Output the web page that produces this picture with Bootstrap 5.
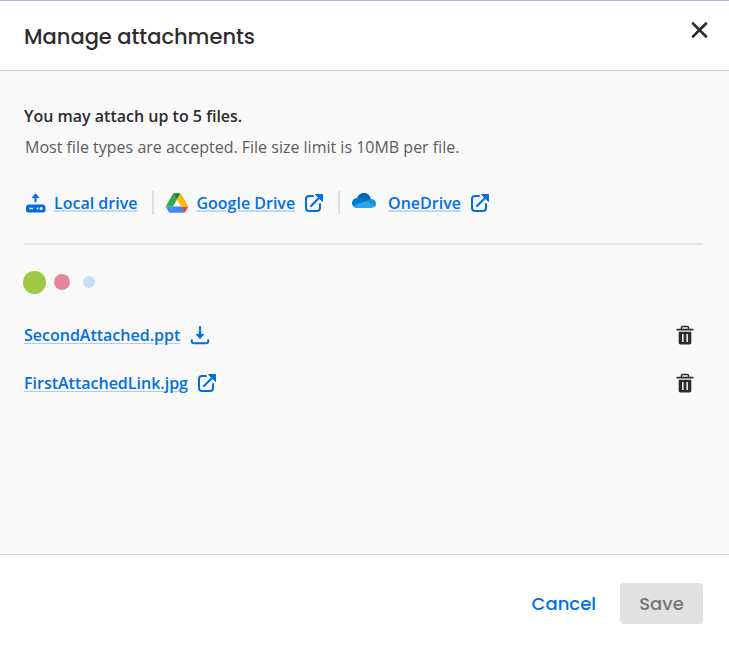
<!DOCTYPE html>
<html lang="en">
<head>
<meta charset="utf-8">
<meta name="viewport" content="width=device-width, initial-scale=1">
<title>Manage attachments</title>
<link href="https://cdn.jsdelivr.net/npm/bootstrap@5.3.0/dist/css/bootstrap.min.css" rel="stylesheet">
<style>
  body { font-family: "Open Sans", sans-serif; font-size: 16px; line-height: 24px; color: #2d2d2f; background: #fff; }
  svg { display: block; flex: none; }
  .dialog-head { border-top: 1px solid #c4a8ec; border-bottom: 1px solid #d0d0d0; padding: 15px 16px 12px 24px; }
  .dialog-title, .dialog-foot .btn { font-family: Poppins, Inter, sans-serif; font-weight: 500; }
  .dialog-title { font-size: 21px; line-height: 42px; }
  .icon-btn { padding: 4px; line-height: 1; color: #2d2d2f; }
  .dialog-main { background: #f9f9f9; padding: 33px 26px 24px 24px; }
  .lead-line { font-weight: 600; margin-bottom: 7px; }
  .hint-line { color: #5c5c5c; padding-left: 1px; margin-bottom: 32px; }
  .sources { gap: 15px; padding-bottom: 28px; border-bottom: 2px solid #e3e3e3; }
  .source { gap: 8px; color: #006fe6; }
  .source + .source { padding-left: 12px; border-left: 2px solid #dedede; }
  .source .ext-icon { margin-left: 2px; }
  .text-link { color: #006fe6; font-weight: 600; text-decoration: underline; text-decoration-color: #a9cdf5; text-decoration-thickness: 1px; text-underline-offset: 2px; }
  .source .text-link { text-decoration-color: #bcd9f8; text-decoration-thickness: 2px; text-underline-offset: 1px; }
  .text-link:hover { color: #0052ad; }
  .loader { height: 24px; margin: 25px 0 17px; }
  .dot { border-radius: 50%; }
  .dot-lg { width: 23px; height: 23px; background: #9ec946; margin-left: -1px; }
  .dot-md { width: 16px; height: 16px; background: #e58597; margin-left: 8px; }
  .dot-sm { width: 12px; height: 12px; background: #c7def7; margin-left: 13px; }
  .file-row { height: 48px; gap: 10px; color: #006fe6; padding-right: 5px; }
  .dialog-foot { border-top: 1px solid #d0d0d0; padding: 28px 26px 22px; gap: 8px; }
  .dialog-foot .btn { font-size: 18px; line-height: 25px; padding: 8px 16px; border: 0; border-radius: 4px; }
  .cancel-btn { color: #006fe6; }
  .save-btn, .save-btn:disabled { background: #e1e1e1; color: #757575; opacity: 1; min-width: 83px; }
</style>
</head>
<body>
<svg class="d-none" aria-hidden="true">
  <symbol id="external" viewBox="0 0 18 18">
    <path d="M8 2H4a3 3 0 0 0-3 3v9a3 3 0 0 0 3 3h8a3 3 0 0 0 3-3v-4" fill="none" stroke="currentColor" stroke-width="2" stroke-linecap="round"/>
    <path d="M6 12l8-8" stroke="currentColor" stroke-width="2.200" stroke-linecap="round"/>
    <path d="M10.500 .5h7v7z" fill="currentColor" stroke="currentColor" stroke-linejoin="round"/>
  </symbol>
  <symbol id="trash" viewBox="0 0 18 20">
    <path d="M5.500 4V2.500q0-1 1-1h5q1 0 1 1V4" fill="none" stroke="currentColor" stroke-width="1.500"/>
    <path d="M1 3.800h16q.6 0 .6.900t-.6.900H1q-.6 0-.6-.9t.6-.9z" fill="currentColor"/>
    <path fill-rule="evenodd" d="M2.700 6.800h12.600v11q0 1.700-1.700 1.700H4.400q-1.700 0-1.700-1.700zM6.100 9v8h1.500V9zM10.400 9v8h1.500V9z" fill="currentColor"/>
  </symbol>
</svg>
<div class="d-flex flex-column min-vh-100" role="dialog" aria-labelledby="dialog-title">
  <header class="dialog-head d-flex justify-content-between align-items-start">
    <h1 class="dialog-title mb-0" id="dialog-title">Manage attachments</h1>
    <button type="button" class="btn border-0 icon-btn" aria-label="Close">
      <svg width="19" height="19" viewBox="0 0 19 19"><path d="M3 3.500l13 13M16 3.500l-13 13" stroke="currentColor" stroke-width="2.600" stroke-linecap="round"/></svg>
    </button>
  </header>
  <main class="dialog-main flex-grow-1">
    <p class="lead-line">You may attach up to 5 files.</p>
    <p class="hint-line">Most file types are accepted. File size limit is 10MB per file.</p>
    <div class="sources d-flex flex-wrap">
      <div class="source d-flex align-items-center">
        <svg width="22" height="20" viewBox="0 0 22 20" aria-hidden="true">
          <path d="M11.500 8.500V3" stroke="currentColor" stroke-width="2" stroke-linecap="round"/><path d="M8.300 4.600l3.200-3.800 3.200 3.800z" fill="currentColor" stroke="currentColor" stroke-linejoin="round"/>
          <path fill-rule="evenodd" d="M5 11.500h13q3.500 0 3.500 3v2.500q0 2.500-2.500 2.500H4.500Q2 19.500 2 17v-2.500q0-3 3-3zM5.500 14.700v1.600h3.500v-1.600zM12.500 15.500a1 1 0 1 0 2 0 1 1 0 0 0-2 0zM15.700 15.500a1.500 1.500 0 1 0 3 0 1.500 1.500 0 0 0-3 0z" fill="currentColor"/>
        </svg>
        <a class="text-link" href="#">Local drive</a>
      </div>
      <div class="source d-flex align-items-center">
        <svg width="22" height="20" viewBox="0 0 87.300 78" aria-hidden="true">
          <path d="M6.600 66.850l3.850 6.650c.8 1.400 1.950 2.500 3.300 3.300L27.500 53H0c0 1.550.4 3.100 1.200 4.500z" fill="#4285f4"/>
          <path d="M43.650 25L29.900 1.200c-1.350.8-2.500 1.900-3.300 3.300L1.200 48.500A9 9 0 0 0 0 53h27.500z" fill="#34a853"/>
          <path d="M73.550 76.800c1.350-.8 2.500-1.900 3.300-3.300L86.100 57.500c.8-1.400 1.200-2.950 1.200-4.500H59.800l5.850 11.500z" fill="#ea4335"/>
          <path d="M43.650 25L57.400 1.200C56.050.4 54.500 0 52.900 0H34.400c-1.600 0-3.150.45-4.500 1.200z" fill="#188038"/>
          <path d="M59.800 53H27.500L13.750 76.800c1.350.8 2.900 1.200 4.500 1.200h50.800c1.600 0 3.150-.45 4.500-1.200z" fill="#4285f4"/>
          <path d="M73.400 26.500L60.700 4.500c-.8-1.400-1.950-2.500-3.300-3.300L43.650 25 59.800 53h27.450c0-1.550-.4-3.100-1.200-4.500z" fill="#fbbc04"/>
        </svg>
        <a class="text-link" href="#">Google Drive</a>
        <svg class="ext-icon" width="18" height="18" aria-hidden="true"><use href="#external"/></svg>
      </div>
      <div class="source d-flex align-items-center">
        <svg class="mb-1 me-1" width="24" height="16" viewBox="0 0 24 16" aria-hidden="true">
          <path d="M5 5.500A7 7 0 0 1 18.800 6L14 9.500z" fill="#0364b8"/>
          <path d="M9 5.200L14 8.200 10 15H5A5 5 0 0 1 5 5q2-.9 4 .2z" fill="#0078d4"/>
          <path d="M13.500 8l4.600-2.100q5.900-.1 5.900 4.700 0 1.800-1 3l-9.500-4z" fill="#1490df"/>
          <path d="M1 12.700L14 8l9 5.200Q21.600 15 19 15H5q-2.600 0-4-2.300z" fill="#28a8ea"/>
        </svg>
        <a class="text-link" href="#">OneDrive</a>
        <svg class="ext-icon" width="18" height="18" aria-hidden="true"><use href="#external"/></svg>
      </div>
    </div>
    <div class="loader d-flex align-items-center" role="status" aria-label="Loading">
      <span class="dot dot-lg"></span><span class="dot dot-md"></span><span class="dot dot-sm"></span>
    </div>
    <ul class="list-unstyled mb-0">
      <li class="file-row d-flex align-items-center">
        <a class="text-link" href="#">SecondAttached.ppt</a>
        <svg width="20" height="20" viewBox="0 0 20 20" aria-hidden="true"><path d="M10 2v8" stroke="currentColor" stroke-width="2.200" stroke-linecap="round"/><path d="M6.500 9.300L10 13.700l3.500-4.400z" fill="currentColor" stroke="currentColor" stroke-linejoin="round"/><path d="M1.800 15v1.200q0 2 2 2h12.400q2 0 2-2V15" fill="none" stroke="currentColor" stroke-width="2" stroke-linecap="round"/></svg>
        <button type="button" class="btn border-0 icon-btn ms-auto" aria-label="Delete SecondAttached.ppt"><svg width="18" height="20"><use href="#trash"/></svg></button>
      </li>
      <li class="file-row d-flex align-items-center">
        <a class="text-link" href="#">FirstAttachedLink.jpg</a>
        <svg width="18" height="18" aria-hidden="true"><use href="#external"/></svg>
        <button type="button" class="btn border-0 icon-btn ms-auto" aria-label="Delete FirstAttachedLink.jpg"><svg width="18" height="20"><use href="#trash"/></svg></button>
      </li>
    </ul>
  </main>
  <footer class="dialog-foot d-flex justify-content-end">
    <button type="button" class="btn cancel-btn">Cancel</button>
    <button type="button" class="btn save-btn" disabled>Save</button>
  </footer>
</div>
<script src="https://cdn.jsdelivr.net/npm/bootstrap@5.3.0/dist/js/bootstrap.bundle.min.js"></script>
</body>
</html>
